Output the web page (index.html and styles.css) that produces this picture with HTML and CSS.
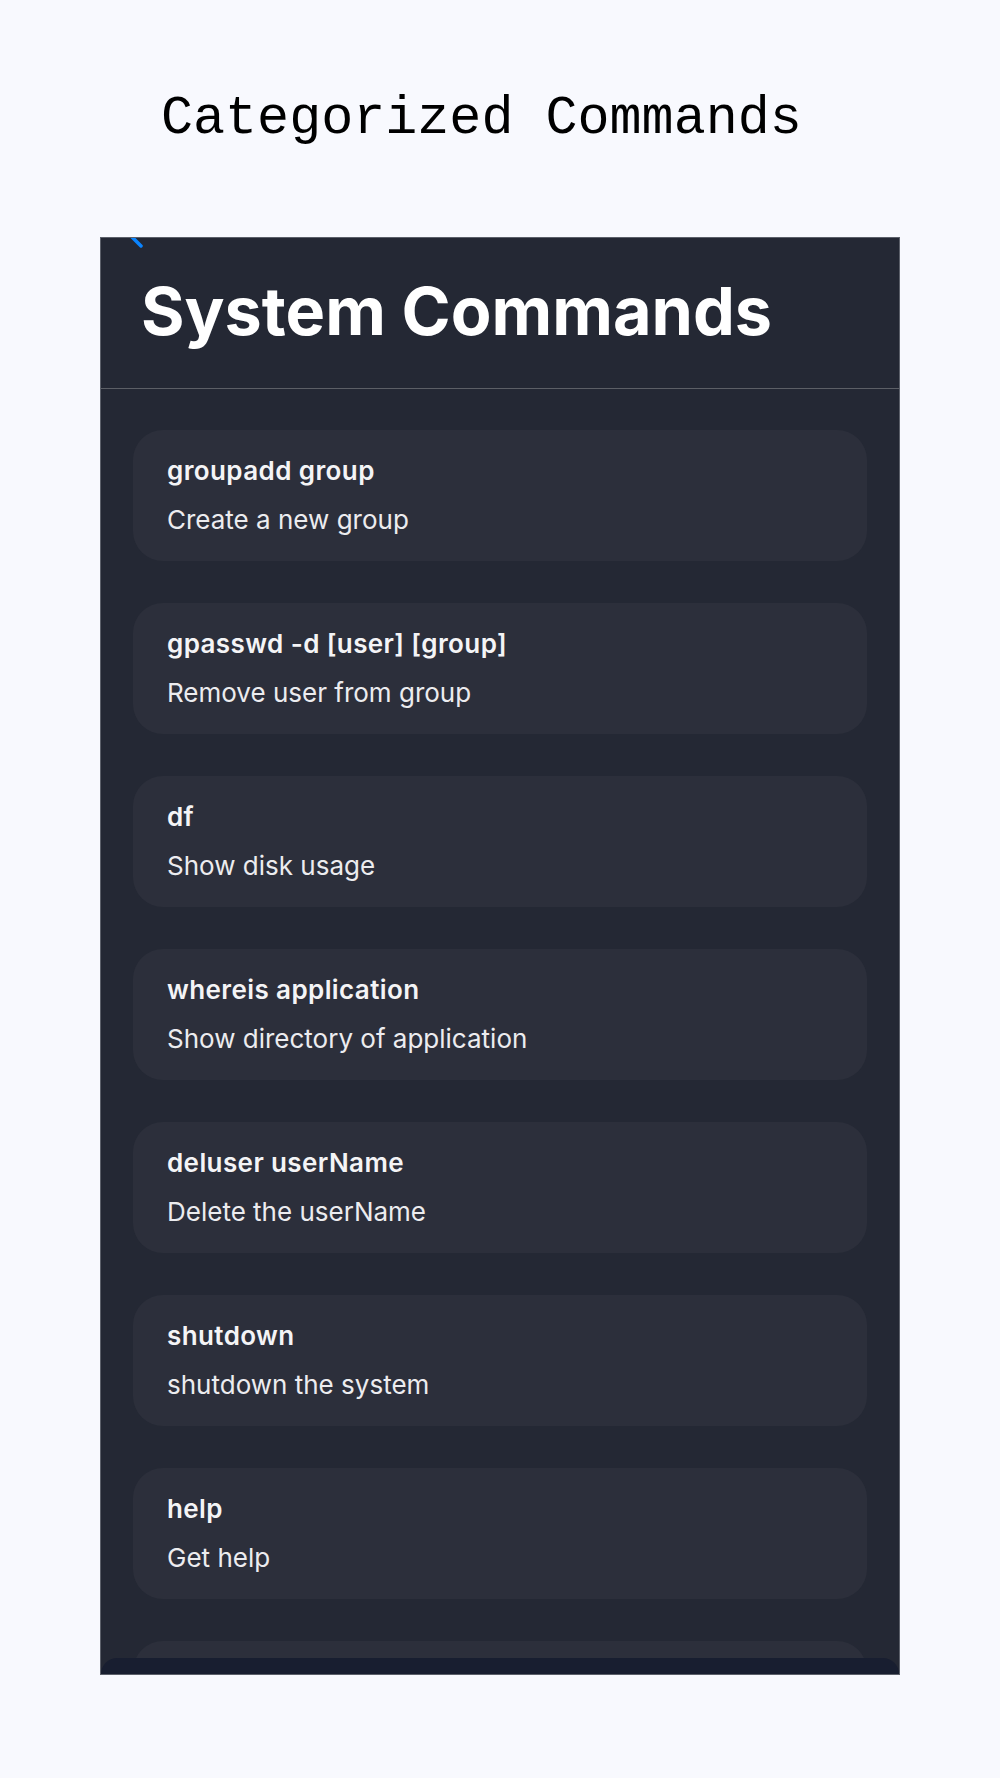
FILE: index.html
```html
<!DOCTYPE html>
<html lang="en">
<head>
<meta charset="utf-8">
<title>Categorized Commands</title>
<link rel="stylesheet" href="styles.css">
</head>
<body>
<main class="page">
  <h1 class="page-title">Categorized Commands</h1>
  <section class="phone">
    <svg class="back" width="24" height="24" viewBox="0 0 24 24" aria-hidden="true">
      <path d="M14 2 L4 12 L14 22" fill="none" stroke="#0a84ff" stroke-width="3.5" stroke-linecap="round" stroke-linejoin="round"/>
    </svg>
    <header class="nav">
      <h2 class="nav-title">System Commands</h2>
    </header>
    <ul class="list">
      <li class="card"><div class="cmd">groupadd group</div><div class="desc">Create a new group</div></li>
      <li class="card"><div class="cmd">gpasswd -d [user] [group]</div><div class="desc">Remove user from group</div></li>
      <li class="card"><div class="cmd">df</div><div class="desc">Show disk usage</div></li>
      <li class="card"><div class="cmd">whereis application</div><div class="desc">Show directory of application</div></li>
      <li class="card"><div class="cmd">deluser userName</div><div class="desc">Delete the userName</div></li>
      <li class="card"><div class="cmd">shutdown</div><div class="desc">shutdown the system</div></li>
      <li class="card"><div class="cmd">help</div><div class="desc">Get help</div></li>
      <li class="card" aria-hidden="true"></li>
    </ul>
    <div class="tabbar"></div>
  </section>
</main>
</body>
</html>
```
FILE: styles.css
```css
html, body {
  margin: 0;
  padding: 0;
  background: #f8f9fe;
}
.page {
  height: 1778px;
  padding-top: 89px;
  box-sizing: border-box;
}
.page-title {
  margin: 0 0 0 161px;
  font-family: "Liberation Mono", monospace;
  font-weight: 400;
  font-size: 53.4px;
  line-height: 60px;
  color: #000;
  height: 148px;
}
.phone {
  position: relative;
  margin: 0 0 0 100px;
  width: 800px;
  height: 1438px;
  box-sizing: border-box;
  border: 1px solid #5c606a;
  background: #242834;
  overflow: hidden;
  font-family: Inter, "Noto Sans", sans-serif;
}
.back {
  position: absolute;
  left: 26px;
  top: -14px;
}
.nav {
  padding: 34px 0 37px 40px;
  border-bottom: 1px solid #5c5f66;
}
.nav-title {
  margin: 0;
  font-size: 66.5px;
  font-weight: 700;
  line-height: 79px;
  letter-spacing: 0;
  color: #ffffff;
}
.list {
  list-style: none;
  margin: 0;
  padding: 41px 32px 0 32px;
  display: flex;
  flex-direction: column;
  gap: 42px;
}
.card {
  background: #2c2f3b;
  border-radius: 30px;
  padding: 26px 34px 25px;
  height: 131px;
  box-sizing: border-box;
  display: flex;
  flex-direction: column;
  gap: 20px;
}
.cmd {
  font-size: 26px;
  font-weight: 600;
  line-height: 29px;
  letter-spacing: 0.4px;
  color: #f4f4f6;
}
.desc {
  font-size: 26px;
  font-weight: 400;
  line-height: 29px;
  color: #ececef;
}
.tabbar {
  position: absolute;
  left: 0;
  right: 0;
  bottom: 0;
  height: 16px;
  background: #181e30;
  border-radius: 30px 30px 0 0;
}
```
